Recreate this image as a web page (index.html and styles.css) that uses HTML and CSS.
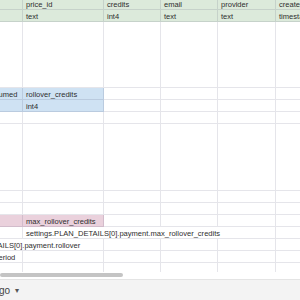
FILE: index.html
```html
<!DOCTYPE html>
<html>
<head>
<meta charset="utf-8">
<link rel="stylesheet" href="styles.css">
</head>
<body>
<div class="sheet">
  <div class="viewport">
    <div class="grid">
      <div class="c green"></div>
      <div class="c green">price_id</div>
      <div class="c green">credits</div>
      <div class="c green">email</div>
      <div class="c green">provider</div>
      <div class="c green">created_at</div>

      <div class="c green"></div>
      <div class="c green">text</div>
      <div class="c green">int4</div>
      <div class="c green">text</div>
      <div class="c green">text</div>
      <div class="c green">timestamp</div>

      <div class="c"></div><div class="c"></div><div class="c"></div><div class="c"></div><div class="c"></div><div class="c"></div>

      <div class="c blue">rollover_credit_consumed</div>
      <div class="c blue">rollover_credits</div>
      <div class="c"></div><div class="c"></div><div class="c"></div><div class="c"></div>

      <div class="c blue"></div>
      <div class="c blue">int4</div>
      <div class="c"></div><div class="c"></div><div class="c"></div><div class="c"></div>

      <div class="c"></div><div class="c"></div><div class="c"></div><div class="c"></div><div class="c"></div><div class="c"></div>
      <div class="c"></div><div class="c"></div><div class="c"></div><div class="c"></div><div class="c"></div><div class="c"></div>
      <div class="c"></div><div class="c"></div><div class="c"></div><div class="c"></div><div class="c"></div><div class="c"></div>
      <div class="c"></div><div class="c"></div><div class="c"></div><div class="c"></div><div class="c"></div><div class="c"></div>

      <div class="c pink"></div>
      <div class="c pink">max_rollover_credits</div>
      <div class="c"></div><div class="c"></div><div class="c"></div><div class="c"></div>

      <div class="c"></div>
      <div class="c span-1-4">settings.PLAN_DETAILS[0].payment.max_rollover_credits</div>
      <div class="c"></div>

      <div class="c span-0-1">settings.PLAN_DETAILS[0].payment.rollover</div>
      <div class="c"></div><div class="c"></div><div class="c"></div><div class="c"></div>

      <div class="c">monthly_rollovers_period</div>
      <div class="c"></div><div class="c"></div><div class="c"></div><div class="c"></div><div class="c"></div>

      <div class="c"></div><div class="c"></div><div class="c"></div><div class="c"></div><div class="c"></div><div class="c"></div>
    </div>
  </div>
  <div class="hscroll"><div class="thumb"></div></div>
  <div class="tabs"><span class="tab-name">go</span><span class="caret">▾</span></div>
</div>
</body>
</html>
```

FILE: styles.css
```css
html, body {
  margin: 0;
  padding: 0;
  background: #ffffff;
}

body {
  font-family: "Liberation Sans", Arial, sans-serif;
  width: 300px;
  height: 300px;
  overflow: hidden;
}

.sheet {
  display: flex;
  flex-direction: column;
  width: 300px;
  height: 300px;
}

.viewport {
  height: 272px;
  overflow: hidden;
  flex: none;
}

.grid {
  display: grid;
  grid-template-columns: 95px 81px 57px 57px 58px 60px;
  grid-template-rows: 10px 12px 66px 12px 12px 12px 67px 12px 12px 12px 12px 12px 12px 12px;
  margin-left: -72px;
  width: max-content;
}

.c {
  box-sizing: border-box;
  border-right: 1px solid rgba(40, 40, 80, 0.12);
  border-bottom: 1px solid rgba(40, 40, 80, 0.12);
  padding: 0 3px 0 3px;
  display: flex;
  align-items: flex-end;
  white-space: nowrap;
  overflow: hidden;
  font-size: 7.55px;
  line-height: 8px;
  color: #2e2e2e;
}

.green { background: #dceadb; }
.blue { background: #cfe2f3; }
.pink { background: #ead1dc; }

.span-1-4 { grid-column: 2 / 6; }
.span-0-1 { grid-column: 1 / 3; }

.hscroll {
  height: 7px;
  flex: none;
  background: #ffffff;
  padding-top: 1px;
  box-sizing: border-box;
}

.thumb {
  width: 123px;
  height: 4px;
  border-radius: 2px;
  background: #c4c4c4;
}

.tabs {
  flex: 1;
  background: #f3f3f3;
  border-top: 1px solid #e4e4e4;
  display: flex;
  align-items: center;
  gap: 5px;
  padding-left: 0;
  color: #444444;
}

.tab-name {
  font-size: 10px;
  margin-left: -1px;
}

.caret {
  font-size: 8px;
  color: #555555;
}
```
